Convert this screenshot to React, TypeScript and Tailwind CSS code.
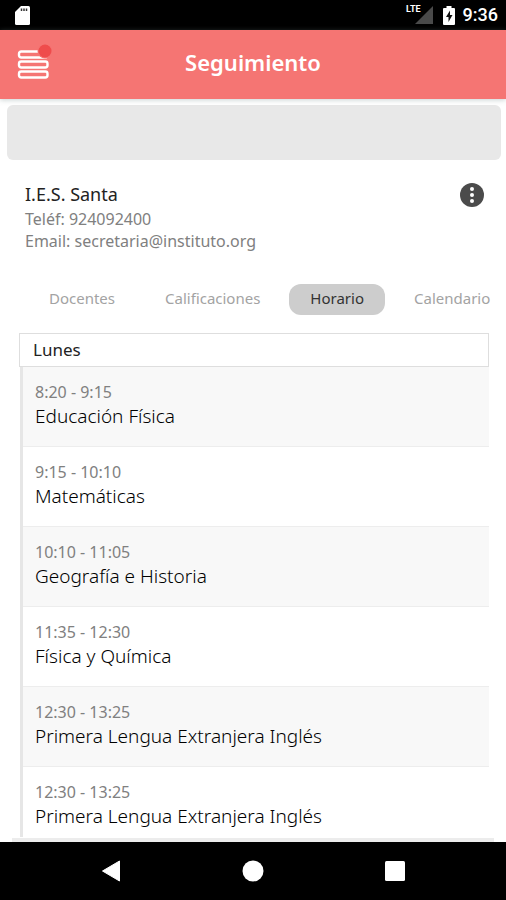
const tabs = ["Docentes", "Calificaciones", "Horario", "Calendario"];

const classes = [
  { time: "8:20 - 9:15", subject: "Educación Física" },
  { time: "9:15 - 10:10", subject: "Matemáticas" },
  { time: "10:10 - 11:05", subject: "Geografía e Historia" },
  { time: "11:35 - 12:30", subject: "Física y Química" },
  { time: "12:30 - 13:25", subject: "Primera Lengua Extranjera Inglés" },
  { time: "12:30 - 13:25", subject: "Primera Lengua Extranjera Inglés" },
];

function StatusBar() {
  return (
    <div className="flex h-[30px] items-center justify-between bg-black pr-2 pl-[15px] text-white">
      <svg width="16" height="19" viewBox="0 0 16 19" aria-hidden="true">
        <path
          d="M6 0h7.500A1.500 1.500 0 0 1 15 1.500v16a1.500 1.500 0 0 1-1.500 1.500h-12A1.500 1.500 0 0 1 0 17.500V6z"
          fill="#fff"
        />
        <path d="M6.500 2.500v2.500M9 2.500v2.500M11.500 2.500v2.500" stroke="#333" strokeWidth="1.500" />
      </svg>
      <div className="flex items-center">
        <div className="relative">
          <svg width="23" height="20" viewBox="0 0 23 20" aria-hidden="true">
            <path d="M23 1v18H5z" fill="#4a4a4a" />
          </svg>
          <span className="absolute top-0 right-3 font-[Roboto] text-[9px] leading-[9px] font-bold">
            LTE
          </span>
        </div>
        <svg width="12" height="19" viewBox="0 0 12 19" className="ml-2.5" aria-hidden="true">
          <path
            d="M3.500 0h5v2H11a1 1 0 0 1 1 1v15a1 1 0 0 1-1 1H1a1 1 0 0 1-1-1V3a1 1 0 0 1 1-1h2.500z"
            fill="#fff"
          />
          <path d="M7 4.500 3 11h2.500v5L9.500 9H7z" fill="#111" />
        </svg>
        <span className="ml-2 font-[Roboto] text-lg leading-5 font-medium">9:36</span>
      </div>
    </div>
  );
}

function Header() {
  return (
    <header className="relative grid h-[69px] grid-cols-[1fr_auto_1fr] items-center bg-[#f57573] px-4 pb-1 shadow-[0_1px_5px_rgba(120,140,140,0.4)]">
      <button type="button" aria-label="Menú" className="w-9">
        <svg width="36" height="38" viewBox="0 0 36 38" fill="none" aria-hidden="true">
          <g stroke="#fff" strokeWidth="2.400">
            <rect x="3" y="7.500" width="28.500" height="6" rx="2.200" />
            <rect x="3" y="17.500" width="28.500" height="6" rx="2.200" />
            <rect x="3" y="27.500" width="28.500" height="6" rx="2.200" />
          </g>
          <circle cx="29" cy="7" r="7.500" fill="#f57573" />
          <circle cx="29" cy="7" r="6.500" fill="#ef4c4c" />
        </svg>
      </button>
      <h1 className="text-[22px] font-semibold text-white">Seguimiento</h1>
    </header>
  );
}

function School() {
  return (
    <section className="flex items-start justify-between pt-[22px] pr-[21px] pl-[25px]">
      <div>
        <h2 className="text-lg leading-6 text-[#222]">I.E.S. Santa</h2>
        <p className="mt-0.5 text-base leading-[22px] text-[#808080]">Teléf: 924092400</p>
        <p className="text-base leading-[22px] text-[#808080]">Email: secretaria@instituto.org</p>
      </div>
      <button type="button" aria-label="Más opciones">
        <svg width="26" height="26" viewBox="0 0 26 26" aria-hidden="true">
          <circle cx="13" cy="13" r="12" fill="#4b4b4b" />
          <g fill="#fff">
            <circle cx="13" cy="7" r="2" />
            <circle cx="13" cy="13" r="2" />
            <circle cx="13" cy="19" r="2" />
          </g>
        </svg>
      </button>
    </section>
  );
}

function Tabs() {
  return (
    <nav className="mt-8 flex gap-2 overflow-hidden pl-7">
      {tabs.map((tab) => (
        <button
          key={tab}
          type="button"
          className={
            tab === "Horario"
              ? "h-[31px] shrink-0 rounded-xl bg-[#cdcdcd] px-[21px] pb-1 text-[15px] leading-5 text-[#333]"
              : "h-[31px] shrink-0 px-[21px] pb-1 text-[15px] leading-5 text-[#a3a3a3]"
          }
        >
          {tab}
        </button>
      ))}
    </nav>
  );
}

function Schedule() {
  return (
    <section className="mt-[18px] mr-[17px] ml-[19px]">
      <h3 className="border border-[#dedede] px-[13px] pt-1 pb-1 text-[17px] leading-6 text-[#222]">
        Lunes
      </h3>
      <ul className="ml-px border-l-3 border-[#e6e6e6]">
        {classes.map((item, i) => (
          <li
            key={i}
            className="h-20 border-b border-[#ededed] px-3 pt-3.5 odd:bg-[#f8f8f8] last:h-[70px] last:border-b-0"
          >
            <p className="text-base leading-[22px] text-[#808080]">{item.time}</p>
            <p className="text-[19px] leading-[26px] font-light text-black">{item.subject}</p>
          </li>
        ))}
      </ul>
    </section>
  );
}

function NavBar() {
  return (
    <nav className="flex h-[58px] items-center justify-between bg-black px-[101px]">
      <button type="button" aria-label="Atrás">
        <svg width="20" height="22" viewBox="0 0 20 22" aria-hidden="true">
          <path d="M18.500 1v20L1.500 11z" fill="#fff" stroke="#fff" strokeLinejoin="round" />
        </svg>
      </button>
      <button type="button" aria-label="Inicio">
        <svg width="22" height="22" viewBox="0 0 22 22" aria-hidden="true">
          <circle cx="11" cy="11" r="10.500" fill="#fff" />
        </svg>
      </button>
      <button type="button" aria-label="Recientes">
        <svg width="20" height="20" viewBox="0 0 20 20" aria-hidden="true">
          <rect width="20" height="20" rx="1.500" fill="#fff" />
        </svg>
      </button>
    </nav>
  );
}

export default function App() {
  return (
    <div className="flex min-h-screen flex-col bg-white font-['Noto_Sans',sans-serif]">
      <StatusBar />
      <Header />
      <main className="flex-1">
        <div className="mt-1.5 mr-[5px] ml-[7px] h-[55px] rounded-md bg-[#e8e8e8]" />
        <School />
        <Tabs />
        <Schedule />
      </main>
      <div className="mx-3 h-1 bg-[#ececec]" />
      <NavBar />
    </div>
  );
}
